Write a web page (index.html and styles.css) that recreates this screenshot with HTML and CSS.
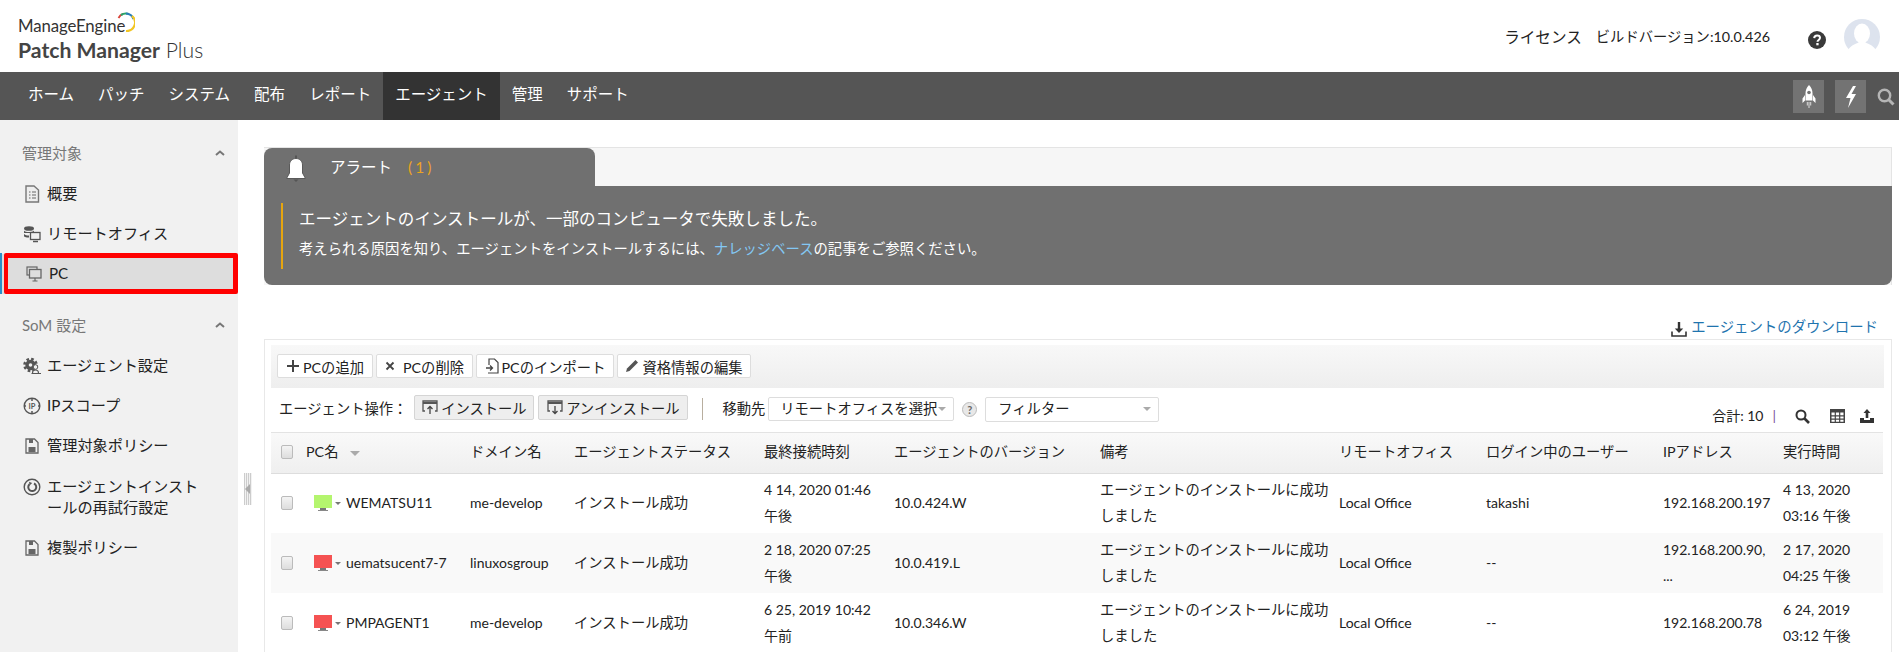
FILE: index.html
```html
<!DOCTYPE html>
<html lang="ja">
<head>
<meta charset="utf-8">
<title>Patch Manager Plus</title>
<link rel="stylesheet" href="styles.css">
</head>
<body>
<header class="top">
  <div class="logo">
    <div class="logo-me">ManageEngine<svg class="logo-arc" viewBox="0 0 18 20" width="18" height="20"><path d="M1.500 6A8.500 8.500 0 0 1 6 1.800" fill="none" stroke="#d9443a" stroke-width="1.800"/><path d="M4 3A8.500 8.500 0 0 1 11 1.800" fill="none" stroke="#2aa56a" stroke-width="2.200"/><path d="M9 1.500A8.500 8.500 0 0 1 16.500 7" fill="none" stroke="#2b7fb8" stroke-width="2.200"/><path d="M15 4A8.500 8.500 0 0 1 9 19" fill="none" stroke="#f2c522" stroke-width="2.200"/></svg></div>
    <div class="logo-pm"><b>Patch Manager</b> Plus</div>
  </div>
  <div class="top-right">
    <span class="lic">ライセンス</span>
    <span class="build">ビルドバージョン:10.0.426</span>
    <svg class="help" viewBox="0 0 18 18" width="18" height="18"><circle cx="9" cy="9" r="9" fill="#3a3a3a"/><path d="M6.200 7.100C6.300 5.300 7.500 4.400 9.100 4.400C10.800 4.400 12 5.400 12 6.800C12 8.900 9.500 8.900 9.500 10.700" fill="none" stroke="#fff" stroke-width="2"/><rect x="8.300" y="12" width="2.300" height="2.300" fill="#fff"/></svg>
    <svg class="avatar" viewBox="0 0 36 36" width="36" height="36"><circle cx="18" cy="18" r="18" fill="#dde3ee"/><ellipse cx="18" cy="14.500" rx="8" ry="10" fill="#fff"/><path d="M4 31C8 25 13 25 15 23L21 23C23 25 28 25 32 31A18 18 0 0 1 4 31Z" fill="#fff"/></svg>
  </div>
</header>
<nav class="nav">
  <a class="nav-item">ホーム</a>
  <a class="nav-item">パッチ</a>
  <a class="nav-item">システム</a>
  <a class="nav-item">配布</a>
  <a class="nav-item">レポート</a>
  <a class="nav-item active">エージェント</a>
  <a class="nav-item">管理</a>
  <a class="nav-item">サポート</a>
  <div class="nav-tools">
    <span class="tool-box"><svg viewBox="0 0 16 26" width="16" height="26"><path d="M8 1C10.500 3.500 11.500 6.500 11.500 9.500L11.500 16.500L4.500 16.500L4.500 9.500C4.500 6.500 5.500 3.500 8 1Z" fill="#fff"/><path d="M4 11L1.500 14.500L1.500 19L4 16.500ZM12 11L14.500 14.500L14.500 19L12 16.500Z" fill="#fff"/><circle cx="8" cy="8.500" r="1.800" fill="#737373"/><path d="M5.800 18h1v3.500h-1zM7.500 18h1v6h-1zM9.200 18h1v3.500h-1z" fill="#ddd"/></svg></span>
    <span class="tool-box"><svg viewBox="0 0 14 24" width="14" height="24"><path d="M9 1L2 13L6.500 13L4 23L12 9L7.500 9L12 1Z" fill="#fff"/></svg></span>
    <svg class="nav-search" viewBox="0 0 18 18" width="18" height="18"><circle cx="7.500" cy="7.500" r="5.700" fill="none" stroke="#b5b5b5" stroke-width="2.400"/><path d="M11.500 11.500L16.500 16.500" stroke="#b5b5b5" stroke-width="3"/></svg>
  </div>
</nav>
<div class="body">
  <aside class="side">
    <div class="side-head first"><span>管理対象</span><svg class="chev" viewBox="0 0 10 6" width="10" height="6"><path d="M1 5L5 1.500L9 5" fill="none" stroke="#777" stroke-width="2"/></svg></div>
    <a class="side-item"><svg class="si" viewBox="0 0 16 18" width="18" height="18"><path d="M2 1H10L14.500 5V17H2Z" fill="#eee" stroke="#777" stroke-width="1.400"/><path d="M5 7h1.500M5 10h1.500M5 13h1.500M8 7h4M8 10h4M8 13h4" stroke="#666" stroke-width="1.200"/></svg><span>概要</span></a>
    <a class="side-item"><svg class="si" viewBox="0 0 18 18" width="18" height="18"><ellipse cx="6" cy="3.500" rx="5" ry="2.300" fill="#555"/><path d="M1 5.500C2 7.500 10 7.500 11 5.500V8H1ZM1 9C3 11 6 10.500 6 10.500V12.500C3 12.500 2 12 1 11.500Z" fill="#555"/><rect x="7.500" y="7.500" width="9.500" height="7" fill="#f1f1f1" stroke="#555" stroke-width="1.300"/><path d="M10 16.500h5" stroke="#555" stroke-width="1.500"/></svg><span>リモートオフィス</span></a>
    <a class="side-item current"><svg class="si" viewBox="0 0 16 16" width="16" height="16"><rect x="1" y="1" width="10" height="8" fill="none" stroke="#666" stroke-width="1.200"/><rect x="3.500" y="3.500" width="11.500" height="8.500" fill="#ddd" stroke="#666" stroke-width="1.300"/><path d="M9 12v2.500M6.500 15h5" stroke="#666" stroke-width="1.200"/></svg><span>PC</span></a>
    <div class="side-head"><span>SoM 設定</span><svg class="chev" viewBox="0 0 10 6" width="10" height="6"><path d="M1 5L5 1.500L9 5" fill="none" stroke="#777" stroke-width="2"/></svg></div>
    <a class="side-item"><svg class="si" viewBox="0 0 18 18" width="18" height="18"><circle cx="7.500" cy="8" r="6" fill="none" stroke="#555" stroke-width="2.600" stroke-dasharray="2.600 2.100"/><circle cx="7.500" cy="8" r="5.200" fill="#555"/><circle cx="7.500" cy="8" r="1.800" fill="#f1f1f1"/><circle cx="12.500" cy="10" r="2.300" fill="#f1f1f1" stroke="#555"/><path d="M8.500 16.500h9.500M9.500 16c0-2.300 1.300-3 3-3s3 .7 3 3" fill="#f1f1f1" stroke="#555" stroke-width="1.100"/></svg><span>エージェント設定</span></a>
    <a class="side-item"><svg class="si" viewBox="0 0 18 18" width="18" height="18"><circle cx="9" cy="9" r="7.800" fill="none" stroke="#555" stroke-width="1.400"/><path d="M9 1v3M9 14v3M1 9h2M15 9h2" stroke="#555" stroke-width="1.500"/><text class="ip-text" x="9" y="11.700">IP</text></svg><span>IPスコープ</span></a>
    <a class="side-item"><svg class="si doc" viewBox="0 0 14 16" width="14" height="16"><path d="M1 1H9.500L13 4.500V15H1Z" fill="#f1f1f1" stroke="#666" stroke-width="1.300"/><path d="M4 1h4v4H4zM3.500 9h7v5h-7z" fill="#666"/></svg><span>管理対象ポリシー</span></a>
    <a class="side-item wrap"><svg class="si" viewBox="0 0 18 18" width="18" height="18"><circle cx="9" cy="9" r="7.800" fill="none" stroke="#555" stroke-width="1.400"/><path d="M6.500 6.200A4 4 0 1 0 11 5.500" fill="none" stroke="#555" stroke-width="2"/><path d="M6 3.800L9.200 5L6.500 7.500Z" fill="#555"/></svg><span>エージェントインスト<br>ールの再試行設定</span></a>
    <a class="side-item"><svg class="si doc" viewBox="0 0 14 16" width="14" height="16"><path d="M1 1H9.500L13 4.500V15H1Z" fill="#f1f1f1" stroke="#666" stroke-width="1.300"/><path d="M4 1h4v4H4zM3.500 9h7v5h-7z" fill="#666"/></svg><span>複製ポリシー</span></a>
    <div class="highlight"></div>
    <div class="splitter"><i></i></div>
  </aside>
  <main class="main">
    <section class="alert">
      <div class="alert-tab">
        <svg class="bell" viewBox="0 0 22 28" width="22" height="28"><path d="M11 .5V4" stroke="#555" stroke-width="2"/><path d="M4.500 18V10C4.500 6.200 7.200 3.500 11 3.500C14.800 3.500 17.500 6.200 17.500 10V18L20.500 23.500H1.500Z" fill="#fff" stroke="#5a5a5a" stroke-width="1"/><path d="M8.500 24.500H13.500L11 27Z" fill="#555"/></svg>
        <span class="alert-label">アラート</span><span class="alert-count">(1)</span>
      </div>
      <div class="alert-body">
        <div class="alert-msg">
          <p class="alert-title">エージェントのインストールが、一部のコンピュータで失敗しました。</p>
          <p class="alert-sub">考えられる原因を知り、エージェントをインストールするには、<a>ナレッジベース</a>の記事をご参照ください。</p>
        </div>
      </div>
    </section>
    <div class="dl"><svg viewBox="0 0 16 16" width="16" height="16"><path d="M8 1v8" stroke="#333" stroke-width="2.400"/><path d="M3.800 7.500H12.200L8 12Z" fill="#333"/><path d="M1 10.500V15H15V10.500" fill="none" stroke="#333" stroke-width="1.600"/></svg><a>エージェントのダウンロード</a></div>
    <section class="panel">
      <div class="bar1">
        <button class="btn"><svg viewBox="0 0 14 14" width="14" height="14"><path d="M7 1v12M1 7h12" stroke="#444" stroke-width="2"/></svg>PCの追加</button>
        <button class="btn"><svg class="x" viewBox="0 0 10 10" width="10" height="10"><path d="M1.500 1.500l7 7M8.500 1.500l-7 7" stroke="#444" stroke-width="1.800"/></svg>PCの削除</button>
        <button class="btn"><svg viewBox="0 0 14 16" width="14" height="16"><path d="M4 7V1H9.500L13 4.500V15H3" fill="none" stroke="#444" stroke-width="1.200"/><path d="M1 10h6M5 7.500L7.500 10L5 12.500" fill="none" stroke="#444" stroke-width="1.300"/></svg>PCのインポート</button>
        <button class="btn"><svg viewBox="0 0 14 14" width="14" height="14"><path d="M10.500 1L13 3.500L4.500 12L1 13L2 9.500Z" fill="#555"/></svg>資格情報の編集</button>
      </div>
      <div class="bar2">
        <span class="lbl">エージェント操作：</span>
        <button class="btn gray"><svg viewBox="0 0 16 15" width="16" height="15"><path d="M3 11H1V1H15V11H13" fill="none" stroke="#555" stroke-width="1.300"/><path d="M1 3h14" stroke="#555" stroke-width="2"/><path d="M8 14V7M5.500 9L8 6.500L10.500 9" fill="none" stroke="#444" stroke-width="1.300"/></svg>インストール</button>
        <button class="btn gray"><svg viewBox="0 0 16 15" width="16" height="15"><path d="M3 11H1V1H15V11H13" fill="none" stroke="#555" stroke-width="1.300"/><path d="M1 3h14" stroke="#555" stroke-width="2"/><path d="M8 6v7M5.500 11L8 13.500L10.500 11" fill="none" stroke="#444" stroke-width="1.300"/></svg>アンインストール</button>
        <span class="vsep"></span>
        <span class="lbl move">移動先</span>
        <span class="sel sel-a">リモートオフィスを選択<i class="caret"></i></span>
        <span class="q">?</span>
        <span class="sel sel-b">フィルター<i class="caret"></i></span>
        <div class="bar-right">
          <span class="total">合計: 10</span><span class="tsep">|</span>
          <svg viewBox="0 0 15 15" width="15" height="15"><circle cx="6" cy="6" r="4.500" fill="none" stroke="#333" stroke-width="2"/><path d="M9.500 9.500L14 14" stroke="#333" stroke-width="2.600"/></svg>
          <svg viewBox="0 0 15 14" width="15" height="14"><path d="M0 0h15v14H0z" fill="#444"/><path d="M1.500 3.500h3.200v2.700H1.500zM5.900 3.500h3.200v2.700H5.900zM10.300 3.500h3.200v2.700h-3.200zM1.500 7.400h3.200v2.200H1.500zM5.900 7.400h3.200v2.200H5.900zM10.300 7.400h3.200v2.200h-3.200zM1.500 10.800h3.200v2H1.500zM5.900 10.800h3.200v2H5.900zM10.300 10.800h3.200v2h-3.200z" fill="#fff"/></svg>
          <svg viewBox="0 0 14 14" width="14" height="14"><path d="M7 0L10.500 4H8.300V9H5.700V4H3.500Z" fill="#333"/><path d="M0 9H4V11H10V9H14V14H0Z" fill="#333"/></svg>
        </div>
      </div>
      <table class="grid">
        <colgroup><col class="c0"><col class="c1"><col class="c2"><col class="c3"><col class="c4"><col class="c5"><col class="c6"><col class="c7"><col class="c8"><col class="c9"><col class="c10"></colgroup>
        <thead>
          <tr><th><span class="cb"></span></th><th>PC名<i class="caret sort"></i></th><th>ドメイン名</th><th>エージェントステータス</th><th>最終接続時刻</th><th>エージェントのバージョン</th><th>備考</th><th>リモートオフィス</th><th>ログイン中のユーザー</th><th>IPアドレス</th><th>実行時間</th></tr>
        </thead>
        <tbody>
          <tr><td><span class="cb"></span></td><td><span class="pc"><svg viewBox="0 0 18 18" width="18" height="18"><path d="M0 1h18v13H0z" fill="#b4f56e"/><path d="M6 14h6v2H6z" fill="#777"/><path d="M4 16h10v1H4z" fill="#888"/></svg><i class="mini"></i>WEMATSU11</span></td><td>me-develop</td><td class="ja">インストール成功</td><td>4 14, 2020 01:46 午後</td><td>10.0.424.W</td><td class="ja">エージェントのインストールに成功しました</td><td>Local Office</td><td>takashi</td><td>192.168.200.197</td><td>4 13, 2020 03:16 午後</td></tr>
          <tr class="alt"><td><span class="cb"></span></td><td><span class="pc"><svg viewBox="0 0 18 18" width="18" height="18"><path d="M0 1h18v13H0z" fill="#f55252"/><path d="M6 14h6v2H6z" fill="#777"/><path d="M4 16h10v1H4z" fill="#888"/></svg><i class="mini"></i>uematsucent7-7</span></td><td>linuxosgroup</td><td class="ja">インストール成功</td><td>2 18, 2020 07:25 午後</td><td>10.0.419.L</td><td class="ja">エージェントのインストールに成功しました</td><td>Local Office</td><td>--</td><td>192.168.200.90,<br>...</td><td>2 17, 2020 04:25 午後</td></tr>
          <tr><td><span class="cb"></span></td><td><span class="pc"><svg viewBox="0 0 18 18" width="18" height="18"><path d="M0 1h18v13H0z" fill="#f55252"/><path d="M6 14h6v2H6z" fill="#777"/><path d="M4 16h10v1H4z" fill="#888"/></svg><i class="mini"></i>PMPAGENT1</span></td><td>me-develop</td><td class="ja">インストール成功</td><td>6 25, 2019 10:42 午前</td><td>10.0.346.W</td><td class="ja">エージェントのインストールに成功しました</td><td>Local Office</td><td>--</td><td>192.168.200.78</td><td>6 24, 2019 03:12 午後</td></tr>
        </tbody>
      </table>
    </section>
  </main>
</div>
</body>
</html>
```

FILE: styles.css
```css
* { box-sizing: border-box; }
html, body { margin: 0; height: 652px; overflow: hidden; background: #fff; }
body { font: 14px/1.4 Lato, "Noto Sans CJK JP", sans-serif; color: #222; display: flex; flex-direction: column; }
p { margin: 0; }

.top { height: 72px; flex: none; display: flex; justify-content: space-between; padding: 0 19px 0 18px; }
.logo { padding-top: 16px; }
.logo-me { position: relative; font-size: 16.800px; line-height: 20px; color: #333; width: 130px; letter-spacing: -.1px; }
.logo-arc { position: absolute; left: 99px; top: -4px; }
.logo-pm { font-size: 21.200px; line-height: 26px; margin-top: 1px; color: #333; font-weight: 300; }
.logo-pm b { font-weight: 700; color: #444; }
.top-right { display: flex; align-items: flex-start; color: #222; padding-top: 26px; }
.top-right > span { line-height: 22px; }
.lic { font-size: 15.600px; }
.build { margin-left: 14px; font-size: 14.300px; }
.help { margin: 5px 0 0 38px; }
.avatar { margin: -7px 0 0 18px; }

.nav { height: 48px; flex: none; background: #555; display: flex; padding-left: 16px; align-items: stretch; }
.nav-item { color: #fff; font-size: 15.500px; line-height: 45px; padding: 0 12px; }
.nav-item.active { background: #333; }
.nav-tools { margin-left: auto; display: flex; align-items: flex-start; padding: 8px 4px 0 0; }
.tool-box { width: 31px; height: 33px; background: #737373; display: flex; align-items: center; justify-content: center; margin-right: 11px; }
.nav-search { margin: 8px 0 0 0; }

.body { flex: 1; display: flex; min-height: 0; }
.side { position: relative; width: 238px; flex: none; background: #f1f1f1; padding-top: 20px; }
.side-head { display: flex; justify-content: space-between; align-items: center; height: 26px; padding: 0 13px 0 22px; color: #777; font-size: 15px; margin-top: 18.500px; }
.side-head.first { margin-top: 0; }
.side-item { display: flex; align-items: center; min-height: 40px; padding-left: 23px; font-size: 15.200px; color: #222; }
.side-head + .side-item { margin-top: 7.500px; }
.side-item .si { flex: none; width: 18px; margin-right: 6px; }
.side-item.current { padding-left: 25px; background: #ddd; }
.side-item.wrap { align-items: flex-start; line-height: 21px; padding: 0 0 0 23px; margin: 10px 0 10px; }
.side-item.wrap .si { margin-top: 2px; }
.ip-text { font: 700 7.500px Lato, sans-serif; fill: #555; text-anchor: middle; }
.highlight { position: absolute; top: 133px; left: 4px; width: 234px; height: 41px; border: 5px solid #f00; border-left-width: 4px; border-radius: 2px; pointer-events: none; }
.highlight::before { content: ""; position: absolute; left: -8px; top: -5px; width: 2px; height: 41px; background: #2a8fc8; }
.splitter { position: absolute; left: 244px; top: 353px; width: 8px; height: 32px; background: repeating-linear-gradient(90deg, #ccc 0 1px, #f2f2f2 1px 2px); }
.splitter i { position: absolute; left: 1px; top: 11px; border: 5px solid transparent; border-right-color: #aaa; border-left: 0; }

.main { flex: 1; min-width: 0; padding: 27px 7px 0 26px; }
.alert { height: 138px; background: #f6f6f6; border-top: 1px solid #e4e4e4; border-right: 1px solid #e4e4e4; }
.alert-tab { width: 331px; height: 38px; background: #707070; border-radius: 8px 8px 0 0; display: flex; align-items: center; color: #fff; padding: 2px 0 0 21px; font-size: 15.500px; }
.bell { flex: none; margin: 2px 0 0 0; }
.alert-label { margin-left: 23px; width: 78px; white-space: nowrap; }
.alert-count { color: #eba41f; letter-spacing: 3px; }
.alert-body { height: 99px; margin-right: -1px; background: #707070; border-radius: 0 0 8px 8px; padding: 17px 0 0 17px; color: #fff; }
.alert-msg { height: 66px; border-left: 2px solid #e6a50f; padding: 2px 0 0 16px; }
.alert-title { font-size: 16.550px; line-height: 28px; }
.alert-sub { font-size: 14.350px; line-height: 26px; margin-top: 3px; }
.alert-sub a { color: #83c7f3; }

.dl { height: 54px; display: flex; justify-content: flex-end; align-items: flex-end; padding: 0 14px 1px 0; color: #1f74ae; gap: 4px; font-size: 14.400px; }
.dl svg { margin-bottom: 1px; }
.dl a { line-height: 22px; }

.panel { border: 1px solid #e8e8e8; border-bottom: 0; padding: 5px 8px 0 6px; height: 320px; }
.bar1 { height: 43px; display: flex; align-items: center; gap: 3px; padding: 0 0 1px 6px; background: linear-gradient(#f8f8f8, #eee); margin-right: -1px; }
.btn { display: inline-flex; align-items: center; justify-content: center; gap: 3px; height: 24px; padding: 0 5px; background: #fff; border: 1px solid #ddd; border-radius: 2px; font: 14.300px Lato, "Noto Sans CJK JP", sans-serif; color: #222; white-space: nowrap; }
.btn.gray { background: #eee; border-color: #d5d5d5; height: 25px; margin-bottom: 4px; }
.btn .x { margin-right: 5px; }
.bar1 .btn:nth-child(1) { width: 96px; }
.bar1 .btn:nth-child(2) { width: 97px; }
.bar1 .btn:nth-child(3) { width: 138px; }
.bar1 .btn:nth-child(4) { width: 134px; }
.bar2 { height: 45px; display: flex; align-items: center; padding: 0 0 2px 8px; border-bottom: 1px solid #e3e3e3; font-size: 14.300px; }
.lbl { white-space: nowrap; }
.bar2 .btn { margin-right: 4px; }
.bar2 .btn:nth-of-type(1) { width: 120px; margin-left: 7px; }
.bar2 .btn:nth-of-type(2) { width: 150px; }
.vsep { width: 1px; height: 22px; background: #b8ae9f; margin: 0 19px 0 10px; }
.sel { position: relative; display: flex; align-items: center; height: 24px; background: #fff; border: 1px solid #ddd; border-radius: 2px; white-space: nowrap; }
.sel-a { width: 186px; margin-left: 3px; padding-left: 11px; }
.sel-b { width: 174px; height: 25px; padding-left: 12px; }
.q { width: 15px; height: 15px; border-radius: 50%; border: 1px solid #bbb; background: #e8e8e8; color: #666; font-size: 11px; font-weight: 700; line-height: 13px; text-align: center; margin: 0 8px; }
.caret { position: absolute; right: 7px; top: 9px; border: 4px solid transparent; border-top-color: #aaa; border-bottom: 0; }
.bar-right { margin-left: auto; display: flex; align-items: center; padding: 14px 9px 0 0; font-size: 14px; }
.total { white-space: nowrap; }
.tsep { color: #7a559a; margin: 0 19px 0 9px; }
.bar-right svg + svg { margin-left: 20px; }
.bar-right svg:last-child { margin-left: 15px; }

.grid { width: 1612px; table-layout: fixed; border-collapse: collapse; }
.c0 { width: 35px; } .c1 { width: 164px; } .c2 { width: 104px; } .c3 { width: 190px; } .c4 { width: 130px; } .c5 { width: 206px; } .c6 { width: 239px; } .c7 { width: 147px; } .c8 { width: 177px; } .c9 { width: 120px; } .c10 { width: 100px; }
.grid th { height: 40px; font-weight: 400; font-size: 14.300px; text-align: left; padding: 0 0 2px; background: linear-gradient(#f9f9f9, #efefef); border-bottom: 1px solid #ddd; white-space: nowrap; }
.grid td { height: 60px; padding: 0 8px 0 0; line-height: 26px; vertical-align: middle; }
.grid td.ja { font-size: 14.300px; }
.grid th:first-child, .grid td:first-child { padding-left: 10px; }
.alt td { background: #f9f9f9; }
.cb { display: block; width: 12px; height: 14px; border: 1px solid #bbb; border-radius: 2px; background: linear-gradient(#f4f4f4, #ddd); }
.caret.sort { position: static; display: inline-block; margin-left: 12px; vertical-align: middle; border-width: 5px; border-bottom: 0; }
.pc { display: flex; align-items: center; margin-left: 8px; white-space: nowrap; }
.mini { border: 3px solid transparent; border-top-color: #777; border-bottom: 0; margin: 0 5px 0 3px; }
```
